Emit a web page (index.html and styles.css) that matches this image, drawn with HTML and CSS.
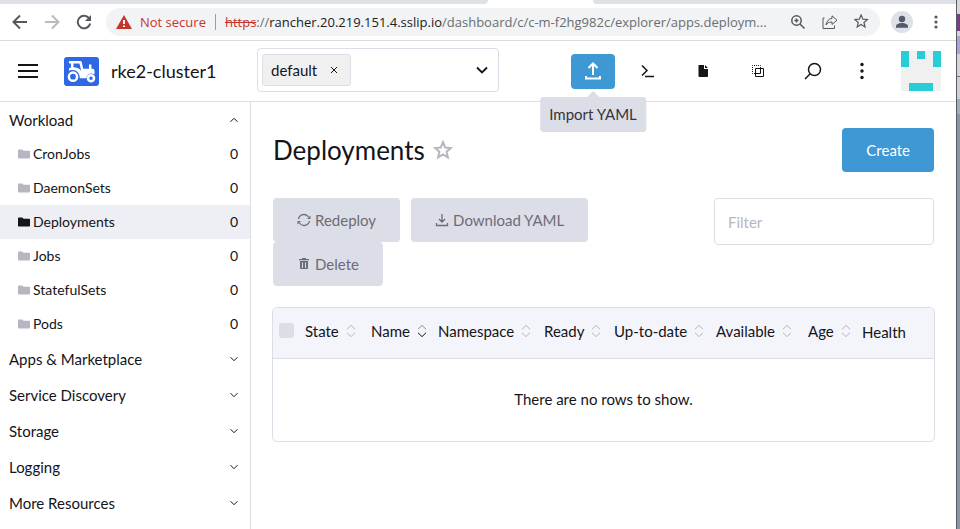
FILE: index.html
```html
<!DOCTYPE html>
<html lang="en">
<head>
<meta charset="utf-8">
<meta name="viewport" content="width=device-width, initial-scale=1">
<title>Deployments</title>
<link rel="stylesheet" href="styles.css">
</head>
<body>
<svg class="sprite" aria-hidden="true">
  <symbol id="folder" viewBox="0 0 12 10"><path d="M0 1.2Q0 .5.8.5h3.4q.6 0 .8.6l.3.7h5.9q.8 0 .8.8V8.700q0 .8-.8.8H.8Q0 9.500 0 8.700z"/></symbol>
  <symbol id="chevron" viewBox="0 0 10 10"><path d="M1.500 3.200 5 6.700l3.500-3.500"/></symbol>
  <symbol id="sort" viewBox="0 0 10 14"><path class="up" d="M1 5.200 5 1.400l4 3.800"/><path class="down" d="M1 8.800l4 3.800 4-3.800"/></symbol>
  <symbol id="star" viewBox="0 0 20 20"><path d="M10 2.200l2.200 5.300 5.700.5-4.300 3.700 1.300 5.600-4.900-3-4.900 3 1.300-5.600L2.100 8l5.700-.5z"/></symbol>
</svg>
<div class="screen">
  <div class="browser">
    <div class="tabs"><span class="tab-before"></span><span class="tab-after"></span></div>
    <div class="toolbar">
      <button class="nav-button" aria-label="Back"><svg class="i16" viewBox="0 0 16 16"><path d="M15 8H2M8 1.500 1.500 8 8 14.500"/></svg></button>
      <button class="nav-button faded" aria-label="Forward"><svg class="i16" viewBox="0 0 16 16"><path d="M1 8h13M8 1.500 14.500 8 8 14.500"/></svg></button>
      <button class="nav-button" aria-label="Reload"><svg class="i16" viewBox="0 0 16 16"><path d="M13.300 4.500A6.300 6.300 0 1 0 14.200 9.500"/><path class="solid" d="M15 1v6H9z"/></svg></button>
      <div class="address">
        <svg class="warning" viewBox="0 0 16 14"><path d="M8 0l8 14H0z"/><path class="mark" d="M8 5v4M8 10.500v1.600"/></svg>
        <span class="insecure">Not secure</span>
        <div class="url" role="textbox" aria-label="Address" tabindex="0"><s>https</s>://<b>rancher.20.219.151.4.sslip.io</b>/dashboard/c/c-m-f2hg982c/explorer/apps.deploym...</div>
        <div class="address-actions">
          <button aria-label="Zoom"><svg class="i16" viewBox="0 0 16 16"><circle cx="6.500" cy="6.500" r="4.700"/><path d="M10 10l4.500 4.500M4.500 6.500h4M6.500 4.500v4"/></svg></button>
          <button aria-label="Share"><svg class="i16" viewBox="0 0 16 16"><path class="thin" d="M2.500 4H1v10.500h11.500v-3M10 1.800 15 6.200 10 10.500V8C7 8 5.200 9 4 11 4.500 7.500 6.500 4.800 10 4.400z"/></svg></button>
          <button aria-label="Bookmark"><svg class="i16" viewBox="1 1 18 18"><use href="#star"/></svg></button>
        </div>
      </div>
      <button class="profile" aria-label="Profile"><svg viewBox="0 0 22 22"><circle cx="11" cy="8" r="3.200"/><path d="M5 16.800v-1.500c0-2 3-3.300 6-3.300s6 1.300 6 3.300v1.500z"/></svg></button>
      <button class="browser-menu" aria-label="Browser menu"><svg viewBox="0 0 4 16"><circle cx="2" cy="3" r="1.600"/><circle cx="2" cy="8" r="1.600"/><circle cx="2" cy="13" r="1.600"/></svg></button>
    </div>

    <header class="header">
      <button class="hamburger" aria-label="Menu"><svg viewBox="0 0 20 14"><path d="M0 1h20M0 7h20M0 13h20"/></svg></button>
      <svg class="logo" viewBox="0 0 35 29">
        <rect width="35" height="29" rx="3"/>
        <path class="frame" d="M6 5.200h10.500l1.700 7.800M8.200 6v5.500M26.200 8.500V14"/>
        <path class="hull" d="M17 11.800h11.500q2 0 2 2v3.700c-3-2.300-7.500-1-8.200 3.700h-6.500c.3-5-3.500-8.500-7.500-8.300-1.600 0-2.500.4-3.300.9v-2.600q4-1.900 8-.4 3 1.200 4 3z"/>
        <circle class="wheel" cx="9" cy="19.700" r="4.100"/><circle class="wheel" cx="27" cy="21.300" r="3"/>
      </svg>
      <span class="cluster">rke2-cluster1</span>
      <div class="namespaces">
        <span class="tag">default <button aria-label="Remove default"><svg viewBox="0 0 8 8"><path d="M1 1l6 6M7 1 1 7"/></svg></button></span>
        <select aria-label="Namespaces"><option></option></select>
        <svg class="caret" viewBox="0 0 12 8"><path d="M1 1.500l5 5 5-5"/></svg>
      </div>
      <div class="actions">
        <div class="with-tip">
          <button class="action primary" aria-label="Import YAML" aria-describedby="tip"><svg class="i18" viewBox="0 0 18 18"><path d="M9 13V2M4.500 6 9 1.500 13.500 6M2 14v2.500h14V14"/></svg></button>
          <span class="tooltip" id="tip" role="tooltip">Import YAML</span>
        </div>
        <button class="action" aria-label="Kubectl shell"><svg class="i14" viewBox="0 0 14 14"><path d="M1 1.500 6 6.500 1 11.500M4 12.500h9"/></svg></button>
        <button class="action" aria-label="Download config"><svg class="i12" viewBox="0 0 12 12"><path class="solid" d="M1.500 0H7v4h4v7q0 1-1 1H2.500q-1 0-1-1zM8 0l3 3H8z"/></svg></button>
        <button class="action" aria-label="Copy config"><svg class="i14" viewBox="0 0 14 14"><path class="thin dashed" d="M1.500 9.500v-8h8"/><path class="thin dashed" d="M1.500 9.500h3M9.500 1.500v3"/><path class="thin" d="M4.500 4.500h8v8h-8z"/><path class="thin" d="M4.500 9.500h5v-5"/></svg></button>
        <button class="action" aria-label="Search"><svg class="i18" viewBox="0 0 18 18"><circle cx="10.500" cy="7.500" r="6"/><path d="M6.200 11.800 1 17"/></svg></button>
        <button class="action narrow" aria-label="More"><svg class="i18" viewBox="0 0 18 18"><g class="solid"><circle cx="9" cy="2.500" r="1.700"/><circle cx="9" cy="9" r="1.700"/><circle cx="9" cy="15.500" r="1.700"/></g></svg></button>
      </div>
      <svg class="avatar" viewBox="0 0 40 40"><rect class="ground" width="40" height="40"/><path d="M0 0h8v16H0zM16 0h8v8h-8zM32 0h8v16h-8zM8 32h24v8H8z"/></svg>
    </header>

    <div class="body">
      <nav class="side">
        <button class="group open">Workload <svg><use href="#chevron"/></svg></button>
        <a class="item" href="#cronjobs"><svg><use href="#folder"/></svg>CronJobs <span>0</span></a>
        <a class="item" href="#daemonsets"><svg><use href="#folder"/></svg>DaemonSets <span>0</span></a>
        <a class="item active" href="#deployments"><svg><use href="#folder"/></svg>Deployments <span>0</span></a>
        <a class="item" href="#jobs"><svg><use href="#folder"/></svg>Jobs <span>0</span></a>
        <a class="item" href="#statefulsets"><svg><use href="#folder"/></svg>StatefulSets <span>0</span></a>
        <a class="item" href="#pods"><svg><use href="#folder"/></svg>Pods <span>0</span></a>
        <button class="group">Apps &amp; Marketplace <svg><use href="#chevron"/></svg></button>
        <button class="group">Service Discovery <svg><use href="#chevron"/></svg></button>
        <button class="group">Storage <svg><use href="#chevron"/></svg></button>
        <button class="group">Logging <svg><use href="#chevron"/></svg></button>
        <button class="group">More Resources <svg><use href="#chevron"/></svg></button>
      </nav>

      <main class="main">
        <div class="title-row">
          <h1>Deployments</h1>
          <button class="favorite" aria-label="Favorite"><svg viewBox="0 0 20 20"><use href="#star"/></svg></button>
          <button class="create">Create</button>
        </div>
        <div class="list-tools">
          <div class="bulk">
            <button disabled><svg class="i14" viewBox="0 0 14 14"><path d="M1.500 6A5.500 5.500 0 0 1 11.500 4M12.500 8A5.500 5.500 0 0 1 2.500 10"/><path class="solid" d="M13.500 2.500V6H10zM.5 11.500V8H4z"/></svg>Redeploy</button>
            <button disabled><svg class="i14" viewBox="0 0 14 14"><path d="M7 1v8M4 6l3 3 3-3M1.500 10v2.500h11V10"/></svg>Download YAML</button>
            <button disabled><svg class="i14" viewBox="0 0 14 14"><path class="solid" d="M5 1h4v1h3v1.200H2V2h3zM3 4h8v7q0 1-1 1H4q-1 0-1-1z"/><path class="slots" d="M5.500 5.500V11M8.500 5.500V11"/></svg>Delete</button>
          </div>
          <input class="filter" type="search" placeholder="Filter" aria-label="Filter">
        </div>
        <div class="card">
          <table>
            <colgroup><col class="c-check"><col class="c-state"><col class="c-name"><col class="c-space"><col class="c-ready"><col class="c-date"><col class="c-avail"><col class="c-age"><col></colgroup>
            <thead>
              <tr>
                <th class="check"><input type="checkbox" aria-label="Select all" disabled></th>
                <th><span class="sortable">State <svg><use href="#sort"/></svg></span></th>
                <th><span class="sortable sorted">Name <svg><use href="#sort"/></svg></span></th>
                <th><span class="sortable">Namespace <svg><use href="#sort"/></svg></span></th>
                <th><span class="sortable">Ready <svg><use href="#sort"/></svg></span></th>
                <th><span class="sortable">Up-to-date <svg><use href="#sort"/></svg></span></th>
                <th><span class="sortable">Available <svg><use href="#sort"/></svg></span></th>
                <th><span class="sortable">Age <svg><use href="#sort"/></svg></span></th>
                <th>Health</th>
              </tr>
            </thead>
            <tbody><tr><td colspan="9">There are no rows to show.</td></tr></tbody>
          </table>
        </div>
      </main>
    </div>
  </div>
  <div class="desktop"></div>
</div>
</body>
</html>
```

FILE: styles.css
```css
* { box-sizing: border-box; }
body {
  margin: 0;
  font: 15px/20px Lato, "Liberation Sans", sans-serif;
  color: #141419;
  background: #fff;
}
button, input, select { font: inherit; color: inherit; }
button { padding: 0; border: 0; background: none; display: flex; align-items: center; justify-content: center; }
svg { display: block; flex: none; fill: none; stroke: currentColor; stroke-width: 2; }
.sprite { position: absolute; width: 0; height: 0; }
.solid { fill: currentColor; stroke: none; }
.thin { stroke-width: 1; }
.i12 { width: 12px; height: 12px; }
.i14 { width: 14px; height: 14px; }
.i16 { width: 16px; height: 16px; }
.i18 { width: 18px; height: 18px; }

.screen { display: flex; min-height: 100vh; }
.browser { flex: 1; min-width: 0; display: flex; flex-direction: column; }
.desktop {
  width: 4px;
  border-left: 1px solid #555b66;
  background: linear-gradient(#d8d8d8 14px, #7f3a85 14px 31px, #d5d5d5 31px 36px, #aaa6cf 36px 54px, #d5d5d5 54px 76px, #777 76px 77px, #d0d0d0 77px 99px, #a3adb8 99px 114px, #8a96a3 114px);
}

/* Browser chrome */
.tabs { display: flex; justify-content: space-between; height: 4px; background: #fff; }
.tab-before { width: 51%; background: #dee1e6; border-bottom-right-radius: 4px; }
.tab-after { width: 38%; background: #dee1e6; border-bottom-left-radius: 4px; }
.toolbar {
  display: flex;
  align-items: center;
  height: 37px;
  padding: 0 12px;
  border-bottom: 1px solid #d9dade;
  color: #55595e;
  font: 13px/20px "Open Sans", "Noto Sans", sans-serif;
}
.nav-button { width: 16px; height: 28px; margin-right: 16px; }
.nav-button:nth-child(3) { margin-right: 14px; }
.faded { color: #b9bbbe; }
.address {
  flex: 1;
  min-width: 0;
  display: flex;
  align-items: center;
  height: 28px;
  padding: 0 10px;
  border-radius: 14px;
  background: #f1f3f4;
}
.warning { width: 16px; height: 14px; fill: #c5372c; stroke: none; }
.mark { stroke: #fff; stroke-width: 2; }
.insecure { margin: 0 9px 0 8px; padding-right: 9px; color: #c5372c; border-right: 1px solid #9b9fa3; line-height: 16px; white-space: nowrap; }
.url { flex: 1; min-width: 0; white-space: nowrap; color: #6a6e73; }
.url s { color: #c5372c; }
.url b { font-weight: 400; color: #202124; }
.address-actions { display: flex; gap: 16px; margin-left: 14px; }
.address-actions svg { stroke-width: 1.500; }
.profile { width: 22px; height: 22px; margin: 0 21px 0 11px; border-radius: 50%; background: #dee1e6; }
.profile svg { width: 22px; height: 22px; fill: #535a6b; stroke: none; }
.browser-menu svg { width: 4px; height: 16px; fill: currentColor; stroke: none; }
.browser-menu { width: 4px; margin-right: 6px; }

/* Cluster header */
.header {
  display: flex;
  align-items: center;
  height: 61px;
  padding: 0 15px 0 18px;
  border-bottom: 1px solid #dcdee7;
}
.hamburger svg { width: 20px; height: 14px; }
.logo { width: 35px; height: 29px; margin: 0 12px 0 26px; fill: #2f68e5; stroke: none; }
.logo .frame { fill: none; stroke: #fff; stroke-width: 2.500; stroke-linecap: round; stroke-linejoin: round; }
.logo .hull { fill: #fff; }
.logo .wheel { fill: #2f68e5; stroke: #fff; stroke-width: 2.500; }
.cluster { width: 146px; font-size: 18px; line-height: 24px; white-space: nowrap; }
.namespaces {
  display: grid;
  grid-template-columns: auto 1fr;
  align-items: center;
  width: 242px;
  height: 44px;
  margin-bottom: 2px;
  padding: 0 4px;
  border: 1px solid #dcdee7;
  border-radius: 4px;
}
.tag {
  display: flex;
  align-items: center;
  gap: 13px;
  height: 32px;
  padding: 0 12px 0 8px;
  border: 1px solid #dcdee7;
  border-radius: 3px;
  background: #f0f0f1;
}
.tag svg { width: 8px; height: 8px; stroke-width: 1; }
.namespaces select { grid-area: 1 / 2; width: 100%; height: 32px; border: 0; background: none; appearance: none; }
.caret { grid-area: 1 / 2; justify-self: end; width: 12px; height: 8px; margin-right: 6px; pointer-events: none; stroke-width: 1.800; }
.actions { display: flex; align-items: center; gap: 11px; margin: 0 23px 0 auto; }
.with-tip { position: relative; }
.action { width: 44px; height: 35px; border-radius: 4px; }
.action svg { stroke-width: 1.500; }
.narrow { width: 32px; }
.primary { background: #3d98d3; color: #fff; }
.primary svg { stroke-width: 2; }
.dashed { stroke-dasharray: 1 1; stroke-dashoffset: .5; }
.tooltip {
  position: absolute;
  top: 43px;
  left: 50%;
  transform: translateX(-50%);
  padding: 7px 9px 8px;
  border-radius: 3px;
  background: #dcdee7;
  color: #33343c;
  white-space: nowrap;
  z-index: 2;
}
.tooltip::before {
  content: "";
  position: absolute;
  top: -6px;
  left: 50%;
  margin-left: -6px;
  border: 6px solid transparent;
  border-top: 0;
  border-bottom-color: #dcdee7;
}
.avatar { width: 40px; height: 40px; fill: #28cdd5; stroke: none; }
.ground { fill: #f0f0f0; }

/* Sidebar */
.body { flex: 1; display: flex; }
.side { width: 251px; border-right: 1px solid #dcdee7; }
.group { width: 100%; height: 36px; padding: 0 11px 0 9px; justify-content: space-between; }
.group.open { height: 35px; }
.group svg { width: 10px; height: 10px; stroke-width: 1; }
.open svg { transform: rotate(180deg); }
.item {
  display: flex;
  align-items: center;
  height: 34px;
  padding: 0 12px 0 18px;
  color: inherit;
  font-size: 14px;
  text-decoration: none;
}
.item svg { width: 12px; height: 10px; margin-right: 3px; fill: #b6b6c2; stroke: none; }
.item span { margin-left: auto; }
.item.active { background: #eeeef5; }
.item.active svg { fill: #141419; }

/* Main area */
.main { flex: 1; min-width: 0; padding: 26px 22px; }
.title-row { display: flex; align-items: center; height: 44px; margin-bottom: 26px; }
h1 { margin: 0 8px 0 0; font-size: 26px; line-height: 32px; font-weight: 400; }
.favorite { color: #b6b6c2; }
.favorite svg { width: 20px; height: 20px; }
.create { height: 44px; margin-left: auto; padding: 0 24px; border-radius: 4px; background: #3d98d3; color: #fff; }
.list-tools { display: flex; align-items: flex-start; margin-bottom: 21px; }
.bulk { flex: 1; display: flex; flex-wrap: wrap; column-gap: 11px; margin-right: 60px; }
.bulk button { height: 44px; padding: 0 24px; gap: 4px; border-radius: 4px; background: #dcdee7; color: #6c6c76; }
.bulk svg { stroke-width: 1.300; }
.slots { stroke: #dcdee7; stroke-width: 1; }
.filter { width: 220px; height: 47px; padding: 0 13px; border: 1px solid #dcdee7; border-radius: 4px; background: #fff; }
.filter::placeholder { color: #b6b6c2; }
.card { border: 1px solid #dcdee7; border-radius: 5px; overflow: hidden; margin: 0 -1px; }
table { width: 100%; table-layout: fixed; border-collapse: collapse; }
th { height: 50px; padding: 0 5px 2px; background: #f4f5fa; border-bottom: 1px solid #dcdee7; font-weight: 400; text-align: left; white-space: nowrap; }
.check { padding: 0 6px 4px; }
.check input { display: block; appearance: none; width: 15px; height: 15px; margin: 0; border-radius: 3px; background: #dcdee7; }
.c-check { width: 27px; }
.c-state { width: 66px; }
.c-name { width: 67px; }
.c-space { width: 106px; }
.c-ready { width: 70px; }
.c-date { width: 102px; }
.c-avail { width: 92px; }
.c-age { width: 54px; }
.sortable { display: flex; align-items: center; gap: 7px; padding-bottom: 2px; }
.sortable svg { width: 10px; height: 14px; color: #b6b6c2; stroke-width: 1; }
.sorted svg { color: #8b8b98; --down: #141419; }
.down { stroke: var(--down, currentColor); }
td { height: 83px; padding: 0 0 1px; text-align: center; }
```
